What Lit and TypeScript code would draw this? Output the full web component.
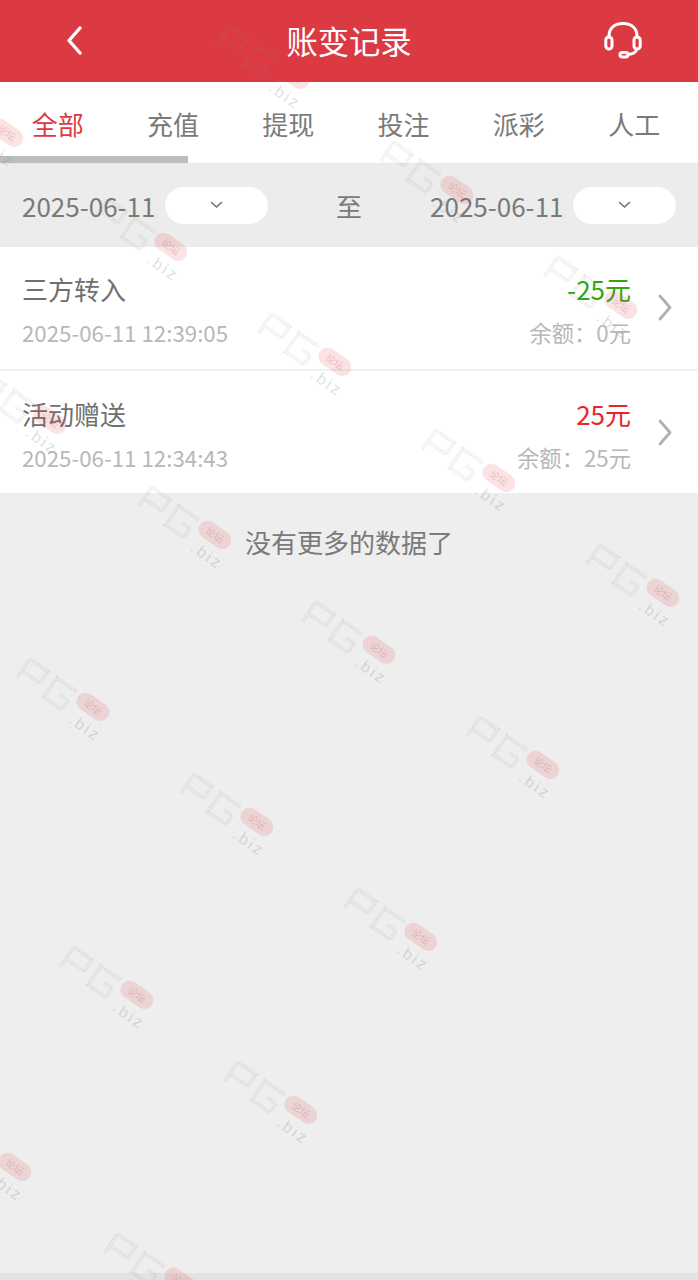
import { LitElement, html, css, svg } from "lit";
import { customElement } from "lit/decorators.js";

const MARKS: [number, number][] = [
  [213, 25], [377, 140], [541, 255], [-73, 83], [91, 197], [255, 312], [419, 428], [583, 543],
  [-30, 370], [135, 485], [299, 600], [463, 715], [13, 657], [177, 772], [341, 887],
  [57, 945], [221, 1060], [-65, 1117], [101, 1232],
];
const TABS = ["全部", "充值", "提现", "投注", "派彩", "人工"];
const ROWS = [
  { name: "三方转入", time: "2025-06-11 12:39:05", amount: "-25元", cls: "minus", bal: "余额：0元" },
  { name: "活动赠送", time: "2025-06-11 12:34:43", amount: "25元", cls: "plus", bal: "余额：25元" },
];

@customElement("app-root")
export class AppRoot extends LitElement {
  static styles = css`
    :host {
      display: block;
      position: relative;
      width: 698px;
      height: 1280px;
      overflow: hidden;
      background: #eeeeee;
      font-family: "Noto Sans CJK SC", "Noto Sans", sans-serif;
      color: #7a7a7a;
    }
    .page { display: flex; flex-direction: column; height: 1280px; }
    .header {
      height: 82px;
      flex: none;
      background: #dc3a42;
      display: grid;
      grid-template-columns: 150px 1fr 150px;
      align-items: center;
      color: #fff;
    }
    .title { text-align: center; font-size: 31.3px; line-height: 82px; }
    .back { width: 16px; height: 29px; margin: 0 0 2px 66px; display: block; }
    .cs { width: 40px; height: 40px; margin: 0 0 2px 55px; display: block; }
    .tabs {
      height: 81px;
      flex: none;
      background: #fff;
      position: relative;
      display: flex;
      border-bottom: 1px solid #e8e8e8;
    }
    .tab {
      flex: 0 0 115.3px;
      text-align: center;
      font-size: 26px;
      line-height: 84px;
      height: 81px;
    }
    .tab.on { color: #dc3a42; }
    .indicator {
      position: absolute;
      left: 0;
      bottom: 0;
      width: 188px;
      height: 7px;
      background: #bcbcbc;
    }
    .filter {
      height: 83px;
      flex: none;
      background: #ececec;
      display: flex;
      align-items: center;
      padding: 0 22px;
      font-size: 26px;
      box-sizing: border-box;
    }
    .date { display: flex; align-items: center; gap: 9.5px; }
    .pick {
      width: 103px;
      height: 37px;
      border-radius: 19px;
      background: #fff;
      display: flex;
      align-items: center;
      justify-content: center;
    }
    .pick svg { width: 13px; height: 8px; margin-bottom: 1px; }
    .to { flex: 1; text-align: center; }
    .row {
      height: 123px;
      flex: none;
      background: #fff;
      display: flex;
      align-items: center;
      padding: 0 27px 0 22px;
      box-sizing: border-box;
    }
    .row + .row { height: 122px; padding-top: 3px; margin-top: 1px; box-shadow: 0 -2px 0 #f0f0f0; }
    .col { display: flex; flex-direction: column; gap: 6px; padding-top: 2px; }
    .right { margin-left: auto; align-items: flex-end; margin-right: 27px; }
    .big { font-size: 26px; line-height: 38px; color: #707070; }
    .small { font-size: 22.3px; line-height: 36px; color: #b8b8b8; }
    .minus { color: #2fa80f; }
    .plus { color: #e8262a; }
    .chev { width: 14px; height: 27px; flex: none; margin-right: -1px; position: relative; top: -1px; }
    .more { text-align: center; font-size: 26px; line-height: 38px; margin-top: 30px; color: #7a7a7a; }
    .foot { margin-top: auto; height: 7px; background: #e2e2e2; flex: none; }
    .marks { position: absolute; inset: 0; width: 698px; height: 1280px; pointer-events: none; }
    .wm-letter { fill: none; stroke: #8a8a8a; stroke-opacity: 0.16; stroke-width: 4; stroke-dasharray: 1.4 1.2; }
    .wm-pill { fill: #e0333a; fill-opacity: 0.14; }
    .wm-small { font-size: 10px; fill: #b0565a; fill-opacity: 0.28; }
    .wm-biz { font-size: 16px; letter-spacing: 2.5px; fill: #8a8a8a; fill-opacity: 0.28; font-family: "Liberation Sans", sans-serif; }
  `;

  private mark([x, y]: [number, number]) {
    return svg`<g transform="translate(${x} ${y}) rotate(35)">
      <path class="wm-letter" d="M15 15V-8H37V6H17"/>
      <path class="wm-letter" d="M72 -8H48V15H70V4H59"/>
      <rect class="wm-pill" x="76" y="-14" width="36" height="18" rx="9"/>
      <text class="wm-small" x="84" y="-1">论坛</text>
      <text class="wm-biz" x="82" y="22">.biz</text>
    </g>`;
  }

  render() {
    const caret = html`<svg viewBox="0 0 13 8"><path d="M1.5 1.5 6.5 6 11.5 1.5" fill="none" stroke="#707070" stroke-width="1.6" stroke-linecap="round"/></svg>`;
    return html`
      <div class="page">
        <div class="header">
          <svg class="back" viewBox="0 0 16 29"><path d="M14 2 3 14.5 14 27" fill="none" stroke="#fff" stroke-width="3.4" stroke-linecap="round" stroke-linejoin="round"/></svg>
          <div class="title">账变记录</div>
          <svg class="cs" viewBox="0 0 40 40" fill="none" stroke="#fff" stroke-width="3" stroke-linecap="round">
            <path d="M6 17C5.500 9 11 3.500 20 3.500S34.500 9 34 17"/>
            <rect x="2.800" y="17" width="6.200" height="12" rx="3.100"/>
            <rect x="31" y="17" width="6.200" height="12" rx="3.100"/>
            <path d="M33.500 29.500C33 32.500 30 34 25 34.500"/>
            <rect x="17" y="32.500" width="8" height="4.500" rx="2.250"/>
          </svg>
        </div>
        <div class="tabs">
          ${TABS.map((t, i) => html`<div class="tab ${i === 0 ? "on" : ""}">${t}</div>`)}
          <div class="indicator"></div>
        </div>
        <div class="filter">
          <div class="date"><span>2025-06-11</span><div class="pick">${caret}</div></div>
          <div class="to">至</div>
          <div class="date"><span>2025-06-11</span><div class="pick">${caret}</div></div>
        </div>
        ${ROWS.map(r => html`
          <div class="row">
            <div class="col"><div class="big">${r.name}</div><div class="small">${r.time}</div></div>
            <div class="col right"><div class="big ${r.cls}">${r.amount}</div><div class="small">${r.bal}</div></div>
            <svg class="chev" viewBox="0 0 14 27"><path d="M2 2 12 13.500 2 25" fill="none" stroke="#b0b0b0" stroke-width="2.800" stroke-linecap="round" stroke-linejoin="round"/></svg>
          </div>`)}
        <div class="more">没有更多的数据了</div>
        <div class="foot"></div>
      </div>
      <svg class="marks" viewBox="0 0 698 1280">${MARKS.map(m => this.mark(m))}</svg>
    `;
  }
}
